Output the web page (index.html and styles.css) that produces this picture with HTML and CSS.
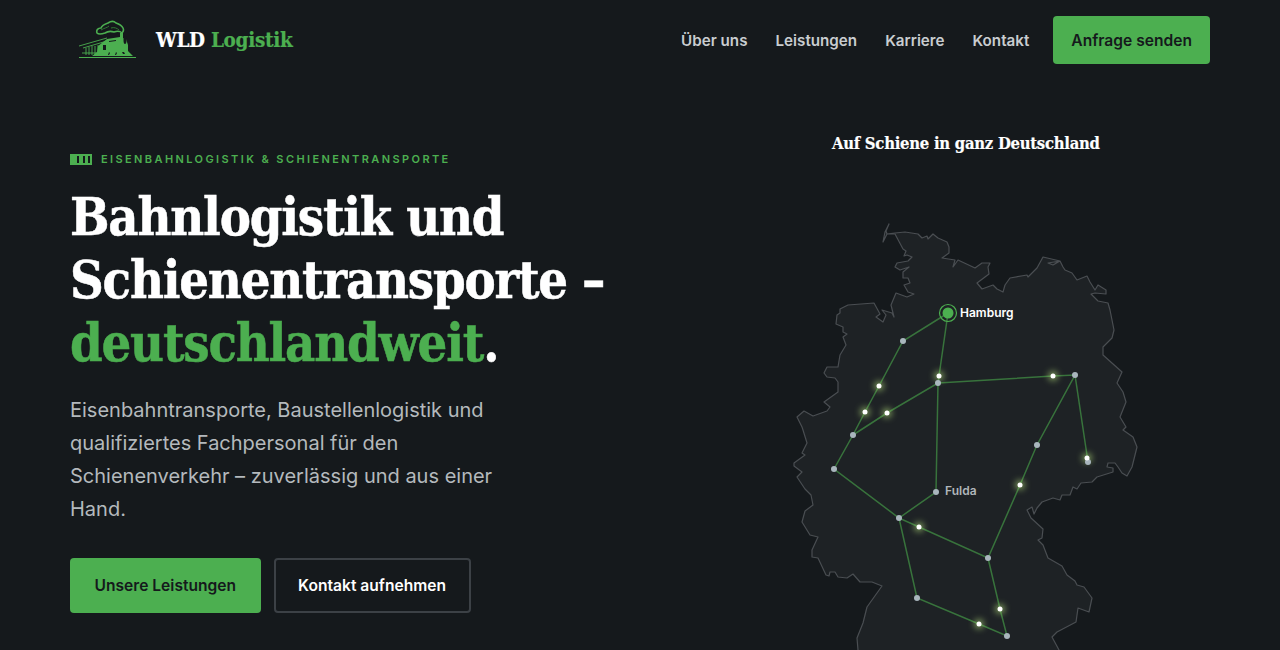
FILE: index.html
```html
<!DOCTYPE html>
<html lang="de">
<head>
    <meta charset="UTF-8">
    <meta name="viewport" content="width=device-width, initial-scale=1.0">
    <title>WLD Logistik</title>
    <link rel="stylesheet" href="styles.css">
</head>
<body>
    <header class="topbar">
        <a href="#" class="brand">
            <svg class="brand-logo" viewBox="0 0 60 42" width="60" height="42">
                <!-- Rauch -->
                <path class="smoke" d="M19 14c-1-3 1-5 4-5 1-3 4-4 7-5 3-2 6-2 8 0 3 1 6 3 7 5 1 2 0 4-1 5-2-2-5-2-8-1-3-1-6-1-9 1-3 1-6 2-8 0z"/>
                <path class="smoke-in" d="M23 11c3-2 6-2 8-4M33 9c3-1 6 0 8 2"/>
                <!-- Wagen -->
                <path class="car" d="M1 27L29 19M5 29L29 22M8 29V36M11 28V36M14 27V36M17 27V36M20 26V36M4 34H22"/>
                <!-- Lok -->
                <path class="loco" d="M20 27L29 20 42 18 42 14 45 14 45 19 48 20 50 26 50 32 55 37H14L19 33z"/>
                <path class="loco-cut" d="M25 26h3v5h-3zM31 22l7-1v1l-7 1zM45.500 21a1.500 4 0 1 0 3 0 1.500 4 0 1 0-3 0zM30 36l1-3 1 1-1 2zM37 36l1-3 1 1-1 2zM44 33h2l1 2h-2z"/>
                <rect class="loco" x="1" y="38" width="57" height="1"/>
            </svg>
            <span class="brand-name">WLD <em>Logistik</em></span>
        </a>
        <nav class="mainnav">
            <a href="#">Über uns</a>
            <a href="#">Leistungen</a>
            <a href="#">Karriere</a>
            <a href="#">Kontakt</a>
            <a href="#" class="btn btn-green nav-btn">Anfrage senden</a>
        </nav>
    </header>

    <main class="hero">
        <section class="hero-text">
            <p class="kicker">
                <span class="kicker-icon"><i></i><i></i><i></i></span>
                EISENBAHNLOGISTIK &amp; SCHIENENTRANSPORTE
            </p>
            <h1>Bahnlogistik und<br>Schienentransporte –<br><em>deutschlandweit</em>.</h1>
            <p class="lead">Eisenbahntransporte, Baustellenlogistik und qualifiziertes Fachpersonal für den Schienenverkehr – zuverlässig und aus einer Hand.</p>
            <div class="hero-btns">
                <a href="#" class="btn btn-green">Unsere Leistungen</a>
                <a href="#" class="btn btn-line">Kontakt aufnehmen</a>
            </div>
        </section>
        <section class="hero-map">
            <h2>Auf Schiene in ganz Deutschland</h2>
            <svg class="map" viewBox="780 170 370 480" width="370" height="480">
                <defs>
                    <filter id="glow" x="-200%" y="-200%" width="500%" height="500%">
                        <feGaussianBlur stdDeviation="3"/>
                    </filter>
                </defs>
                <path class="land" d="M883 242L885 232 889 224 886 231 887 234 895 233 905 232 918 234 922 238 927 236 928 239 933 234 938 238 947 242 949 247 949 253 942 258 955 260 953 267 958 260 975 268 982 263 990 263 988 267 989 274 977 283 982 289 993 285 997 289 1003 292 1005 285 1010 278 1027 275 1028 277 1037 268 1043 257 1060 261 1053 265 1048 263 1060 261 1063 267 1065 270 1072 273 1077 280 1087 276 1090 282 1095 290 1098 285 1106 290 1106 294 1095 293 1091 294 1098 301 1108 303 1110 310 1114 330 1112 338 1103 347 1103 355 1122 372 1117 383 1123 392 1126 402 1120 417 1126 427 1123 430 1133 437 1137 447 1132 467 1127 476 1122 473 1118 467 1115 463 1108 463 1107 467 1113 468 1113 472 1097 477 1092 482 1081 483 1077 489 1073 487 1070 495 1062 495 1060 500 1053 498 1042 502 1037 508 1034 514 1032 507 1027 510 1031 518 1043 529 1042 538 1038 540 1043 545 1048 558 1062 566 1067 575 1075 581 1077 585 1084 587 1092 598 1089 612 1078 608 1076 622 1057 632 1052 637 1059 650 1065 665 855 665 858 650 857 638 863 623 867 607 882 586 872 582 860 582 853 574 847 578 838 577 835 572 830 572 829 576 826 575 818 558 812 557 812 550 818 537 810 535 802 522 805 511 813 505 811 495 805 489 797 477 802 472 794 466 794 463 805 455 802 453 807 443 803 430 802 427 797 417 804 411 813 416 827 411 830 407 824 402 838 392 838 382 835 378 827 377 824 373 827 367 838 367 840 355 846 345 843 337 847 334 843 332 843 327 836 324 837 315 840 313 840 309 848 305 874 303 880 314 876 317 883 322 886 315 882 310 892 313 894 317 891 305 896 293 907 297 914 294 908 292 904 285 910 283 908 278 903 278 903 272 909 267 900 270 895 267 897 263 908 261 912 257 907 255 904 256 906 251 903 249 895 234 887 234z"/>
                <g class="rails">
                    <polyline points="948,313 903,341 879,386 865,412 853,435 834,469 899,518 936,492 938,383 948,313"/>
                    <polyline points="853,435 887,413 938,383 1053,376 1075,375 1037,445 1020,485 988,558 919,527 899,518 917,598 979,624 1007,636 1000,609 988,558"/>
                    <line x1="1075" y1="375" x2="1088" y2="462"/>
                </g>
                <g class="halo" filter="url(#glow)">
                    <circle cx="879" cy="386" r="5"/><circle cx="865" cy="412" r="5"/><circle cx="887" cy="413" r="5"/>
                    <circle cx="939" cy="376" r="5"/><circle cx="1053" cy="376" r="5"/><circle cx="1087" cy="458" r="5"/>
                    <circle cx="1020" cy="485" r="5"/><circle cx="919" cy="527" r="5"/><circle cx="1000" cy="609" r="5"/>
                    <circle cx="979" cy="624" r="5"/>
                </g>
                <g class="stop">
                    <circle cx="903" cy="341" r="3"/><circle cx="853" cy="435" r="3"/><circle cx="834" cy="469" r="3"/>
                    <circle cx="899" cy="518" r="3"/><circle cx="936" cy="492" r="3"/><circle cx="938" cy="383" r="3"/>
                    <circle cx="1075" cy="375" r="3"/><circle cx="1037" cy="445" r="3"/><circle cx="988" cy="558" r="3"/>
                    <circle cx="917" cy="598" r="3"/><circle cx="1007" cy="636" r="3"/><circle cx="1088" cy="462" r="3"/>
                </g>
                <g class="train">
                    <circle cx="879" cy="386" r="2.500"/><circle cx="865" cy="412" r="2.500"/><circle cx="887" cy="413" r="2.500"/>
                    <circle cx="939" cy="376" r="2.500"/><circle cx="1053" cy="376" r="2.500"/><circle cx="1087" cy="458" r="2.500"/>
                    <circle cx="1020" cy="485" r="2.500"/><circle cx="919" cy="527" r="2.500"/><circle cx="1000" cy="609" r="2.500"/>
                    <circle cx="979" cy="624" r="2.500"/>
                </g>
                <circle class="hub-ring" cx="948" cy="313" r="8.500"/>
                <circle class="hub" cx="948" cy="313" r="5.500"/>
                <text class="label label-main" x="960" y="317">Hamburg</text>
                <text class="label" x="945" y="495">Fulda</text>
            </svg>
        </section>
    </main>
</body>
</html>
```
FILE: styles.css
```css
* {
    margin: 0;
    padding: 0;
    box-sizing: border-box;
}
html, body {
    height: 650px;
    overflow: hidden;
}
body {
    background-color: #15191c;
    color: #fff;
    font-family: Inter, "Noto Sans", sans-serif;
}
a {
    text-decoration: none;
    color: inherit;
}
em {
    font-style: normal;
    color: #4caf50;
}
.topbar {
    display: flex;
    justify-content: space-between;
    align-items: center;
    height: 80px;
    padding: 0 70px 0 78px;
}
.brand {
    display: flex;
    align-items: center;
    gap: 18px;
}
.brand-logo {
    display: block;
}
.smoke {
    fill: none;
    stroke: #4caf50;
    stroke-width: 1.600;
}
.smoke-in {
    fill: none;
    stroke: #2f7a33;
    stroke-width: 1;
}
.car {
    fill: none;
    stroke: #4caf50;
    stroke-width: .9;
}
.loco {
    fill: #4caf50;
}
.loco-cut {
    fill: #15191c;
}
.brand-name {
    font-family: "DejaVu Serif Condensed", "DejaVu Serif", serif;
    font-weight: 700;
    font-size: 20.500px;
    letter-spacing: -.3px;
    -webkit-text-stroke: .2px currentColor;
}
.brand-name em {
    -webkit-text-stroke: .2px #4caf50;
}
.mainnav {
    display: flex;
    align-items: center;
    gap: 28px;
    font-size: 15.200px;
    font-weight: 600;
    color: #c9cdd0;
}
.btn {
    display: inline-flex;
    align-items: center;
    justify-content: center;
    border-radius: 4px;
    font-weight: 600;
    font-size: 15.600px;
}
.btn-green {
    background-color: #4caf50;
    color: #15191c;
    height: 55px;
    padding: 0 24.500px;
}
.nav-btn {
    height: 48px;
    padding: 0 18px;
    margin-left: -4px;
}
.btn-line {
    height: 55px;
    padding: 0 22.500px;
    border: 2px solid #3c4146;
    color: #fff;
}
.hero {
    display: flex;
    justify-content: space-between;
    padding-left: 70px;
    padding-right: 130px;
}
.hero-text {
    width: 560px;
    padding-top: 72px;
}
.kicker {
    display: flex;
    align-items: center;
    gap: 9px;
    color: #4caf50;
    font-size: 11px;
    font-weight: 600;
    letter-spacing: 2.400px;
    white-space: nowrap;
}
.kicker-icon {
    display: flex;
    justify-content: space-between;
    width: 22px;
    height: 11px;
    padding: 2px 2px 2px 7px;
    background-color: #4caf50;
}
.kicker-icon i {
    width: 2px;
    background-color: #15191c;
}
.hero-text h1 {
    margin-top: 19px;
    width: 600px;
    font-family: "DejaVu Serif Condensed", "DejaVu Serif", serif;
    font-size: 52px;
    font-weight: 700;
    line-height: 63px;
    letter-spacing: -1.200px;
    -webkit-text-stroke: .5px currentColor;
}
.hero-text h1 em {
    -webkit-text-stroke: .5px #4caf50;
}
.lead {
    margin-top: 20px;
    width: 440px;
    font-size: 20px;
    line-height: 33px;
    color: #b4b9bd;
}
.hero-btns {
    display: flex;
    gap: 13px;
    margin-top: 32px;
}
.hero-map {
    width: 370px;
    flex-shrink: 0;
}
.hero-map h2 {
    margin-top: 54px;
    margin-bottom: 17px;
    padding-left: 52px;
    font-family: "DejaVu Serif Condensed", "DejaVu Serif", serif;
    font-size: 16.500px;
    font-weight: 700;
    letter-spacing: -.25px;
    white-space: nowrap;
    -webkit-text-stroke: .2px currentColor;
}
.map {
    display: block;
}
.land {
    fill: #1e2225;
    stroke: #4a4e52;
    stroke-width: 1.200;
    stroke-linejoin: round;
}
.rails {
    fill: none;
    stroke: #38733c;
    stroke-width: 1.500;
}
.halo {
    fill: #b6e27c;
    opacity: .6;
}
.stop {
    fill: #a9b6bd;
}
.train {
    fill: #fff;
}
.hub {
    fill: #4caf50;
}
.hub-ring {
    fill: none;
    stroke: #4caf50;
    stroke-width: 1.200;
}
.label {
    font-size: 12px;
    font-weight: 600;
    fill: #b0b6ba;
}
.label-main {
    fill: #fff;
}
```
